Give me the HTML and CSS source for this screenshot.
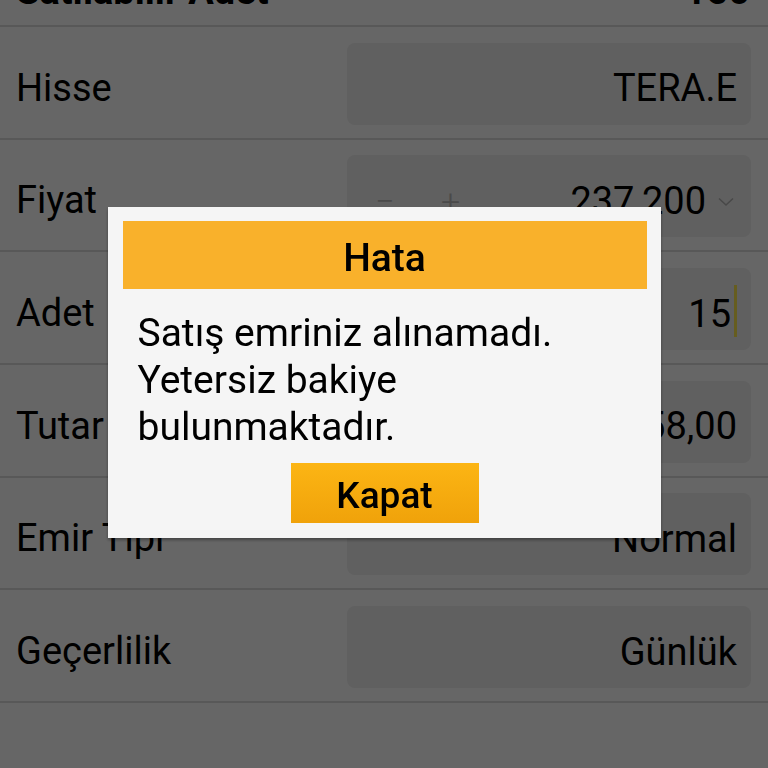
FILE: index.html
```html
<!DOCTYPE html>
<html lang="tr">
<head>
    <meta charset="UTF-8">
    <meta name="viewport" content="width=device-width, initial-scale=1.0">
    <title>Satış Emri</title>
    <link rel="stylesheet" href="styles.css">
</head>
<body>
    <div class="order-form">
        <div class="row row-summary">
            <span class="label">Satılabilir Adet</span>
            <span class="summary-value">150</span>
        </div>
        <div class="row">
            <span class="label">Hisse</span>
            <div class="field">TERA.E</div>
        </div>
        <div class="row">
            <span class="label">Fiyat</span>
            <div class="field field-price">
                <span class="step">&minus;</span>
                <span class="step">+</span>
                <span class="price">237,200</span>
                <svg class="chevron" width="16" height="10" viewBox="0 0 16 10">
                    <path d="M1 1.5 L8 8 L15 1.5" fill="none" stroke="#b4b4b4" stroke-width="1.6"/>
                </svg>
            </div>
        </div>
        <div class="row">
            <span class="label">Adet</span>
            <div class="field field-input">15<span class="cursor"></span></div>
        </div>
        <div class="row">
            <span class="label">Tutar</span>
            <div class="field">3.558,00</div>
        </div>
        <div class="row">
            <span class="label">Emir Tipi</span>
            <div class="field">Normal</div>
        </div>
        <div class="row">
            <span class="label">Geçerlilik</span>
            <div class="field">Günlük</div>
        </div>
    </div>

    <div class="overlay">
        <div class="dialog">
            <div class="dialog-title">Hata</div>
            <p class="dialog-message">Satış emriniz alınamadı. Yetersiz bakiye bulunmaktadır.</p>
            <div class="dialog-actions">
                <button class="btn-close">Kapat</button>
            </div>
        </div>
    </div>
</body>
</html>
```

FILE: styles.css
```css
html, body {
    margin: 0;
    padding: 0;
    height: 100%;
    overflow: hidden;
}
body {
    font-family: Roboto, "Noto Sans", sans-serif;
    background: #fff;
    color: #000;
}
.order-form {
    margin-top: -85.67px;
}
.row {
    box-sizing: border-box;
    height: 112.67px;
    display: flex;
    align-items: center;
    justify-content: space-between;
    padding: 3px 17px 0 16px;
    border-bottom: 2px solid #dcdcdc;
}
.label {
    font-size: 38px;
    line-height: 1.2;
    padding-top: 9px;
}
.row-summary {
    align-items: flex-end;
    padding-bottom: 10px;
    padding-right: 18px;
}
.row-summary .label,
.summary-value {
    font-size: 38px;
    line-height: 1.2;
    font-weight: bold;
    padding-top: 0;
}
.field {
    box-sizing: border-box;
    width: 404px;
    height: 82px;
    background: #f0f0f0;
    border-radius: 8px;
    display: flex;
    align-items: center;
    justify-content: flex-end;
    padding: 9px 14px 0 0;
    font-size: 38px;
}
.field-price {
    justify-content: flex-start;
    padding-left: 28px;
    padding-right: 17px;
}
.step {
    color: #b9b9b9;
    font-size: 34px;
    font-weight: 300;
    width: 66px;
}
.price {
    margin-left: auto;
}
.chevron {
    margin-left: 12px;
    margin-top: 2px;
}
.field-input {
    padding-right: 14px;
}
.cursor {
    display: inline-block;
    width: 3px;
    height: 52px;
    margin-left: 3px;
    margin-bottom: 6px;
    background: #ffe94f;
}

/* modal */
.overlay {
    position: fixed;
    top: 0;
    left: 0;
    right: 0;
    bottom: 0;
    background: rgba(0, 0, 0, 0.6);
    display: flex;
    justify-content: center;
    align-items: flex-start;
    padding-top: 207px;
}
.dialog {
    box-sizing: border-box;
    width: 553px;
    background: #f5f5f5;
    padding: 14px 14px 15px 15px;
    box-shadow: 0 2px 3px rgba(0, 0, 0, 0.35);
}
.dialog-title {
    box-sizing: border-box;
    height: 68px;
    padding-top: 6px;
    background: #f9b12b;
    display: flex;
    align-items: center;
    justify-content: center;
    font-size: 39px;
    font-weight: 500;
}
.dialog-message {
    margin: 21px 0 0 15px;
    padding-right: 60px;
    font-size: 39px;
    line-height: 47px;
}
.dialog-actions {
    display: flex;
    justify-content: center;
    margin-top: 12px;
}
.btn-close {
    width: 188px;
    height: 60px;
    padding: 4px 0 0;
    border: none;
    border-radius: 0;
    background: linear-gradient(#fcb514, #f0a20a);
    font-family: Roboto, "Noto Sans", sans-serif;
    font-size: 37px;
    font-weight: 500;
    color: #000;
}
```
